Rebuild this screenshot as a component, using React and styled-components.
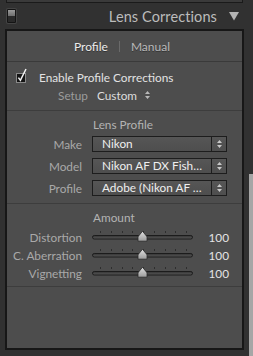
import React from 'react';
import styled, { createGlobalStyle } from 'styled-components';

const Global = createGlobalStyle`
  html, body { margin: 0; padding: 0; background: #313131; }
  body { font-family: Lato, "Open Sans", sans-serif; }
`;

const FS = '11.8px';

const Page = styled.div`
  width: 253px;
  height: 356px;
  display: flex;
  background: #313131;
  overflow: hidden;
`;

const Column = styled.div`
  width: 239px;
  margin-left: 5px;
  display: flex;
  flex-direction: column;
  padding-bottom: 6px;
`;

const Gutter = styled.div`
  flex: 1;
  display: flex;
  justify-content: flex-end;
  padding-top: 174px;
`;

const ScrollThumb = styled.div`
  width: 4px;
  height: 182px;
  background: #a6a6a6;
`;

const Stub = styled.div`
  height: 2px;
  margin: 0 1px;
  background: #3a3a3a;
  border: 1px solid #1a1a1a;
  border-top: none;
`;

const Header = styled.div`
  height: 26px;
  display: flex;
  align-items: center;
  padding: 0 5px 0 2px;
`;

const Toggle = styled.div`
  width: 7px;
  height: 12px;
  border: 1px solid #141414;
  border-radius: 1px;
  background: linear-gradient(#9a9a9a 0, #6e6e6e 50%, #2a2a2a 50%, #2a2a2a 100%);
  box-shadow: 0 0 0 1px #444;
`;

const HeaderTitle = styled.div`
  margin-left: auto;
  font-size: 14.5px;
  color: #bcbcbc;
  letter-spacing: 0.1px;
`;

const Panel = styled.div`
  flex: 1;
  display: flex;
  flex-direction: column;
  background: #4d4d4d;
  border: 2px solid #171717;
`;

const Tabs = styled.div`
  height: 30px;
  display: flex;
  align-items: center;
  justify-content: center;
  gap: 11px;
  padding-right: 5px;
  border-bottom: 1px solid #3a3a3a;
  font-size: 12px;
`;

const Tab = styled.span`
  color: ${p => (p.$active ? '#ececec' : '#b9b9b9')};
  text-shadow: 0 1px 0 rgba(0, 0, 0, 0.35);
`;

const TabSep = styled.span`
  width: 1px;
  height: 11px;
  background: #6a6a6a;
`;

const Section = styled.div`
  display: flex;
  flex-direction: column;
  padding: ${p => p.$pad};
  border-bottom: ${p => (p.$last ? 'none' : '1px solid #3d3d3d')};
  flex: ${p => (p.$last ? 1 : 'none')};
`;

const CheckRow = styled.label`
  height: 16px;
  display: flex;
  align-items: center;
  padding-left: 9px;
  gap: 9px;
  font-size: ${FS};
  color: #e2e2e2;
`;

const SetupRow = styled.div`
  height: 18px;
  margin-top: 1px;
  display: grid;
  grid-template-columns: 81px auto auto;
  column-gap: 9px;
  align-items: center;
  justify-content: start;
  font-size: ${FS};
`;

const Label = styled.span`
  text-align: right;
  color: ${p => p.$color || '#a9a9a9'};
  white-space: nowrap;
`;

const Value = styled.span`
  color: #dcdcdc;
  display: flex;
  align-items: center;
  gap: 8px;
`;

const SectionTitle = styled.div`
  height: 14px;
  line-height: 14px;
  padding-left: 86px;
  font-size: ${FS};
  color: #b3b3b3;
  margin-bottom: ${p => p.$mb};
`;

const Rows = styled.div`
  display: flex;
  flex-direction: column;
  gap: ${p => p.$gap};
`;

const FieldRow = styled.div`
  height: ${p => p.$h};
  display: grid;
  grid-template-columns: 75px ${p => p.$ctl} ${p => p.$val || '0px'};
  column-gap: 10px;
  align-items: center;
  font-size: ${FS};
`;

const Select = styled.div`
  height: 16px;
  box-sizing: border-box;
  display: flex;
  border: 1px solid #1d1d1d;
  background: linear-gradient(#565656, #4e4e4e);
`;

const SelectText = styled.span`
  flex: 1;
  padding-left: 9px;
  line-height: 14px;
  color: #efefef;
  white-space: nowrap;
  overflow: hidden;
`;

const SelectArrows = styled.span`
  width: 14px;
  border-left: 1px solid #1d1d1d;
  display: flex;
  align-items: center;
  justify-content: center;
`;

const SliderValue = styled.span`
  text-align: right;
  color: #e4e4e4;
`;

const UpDown = ({ color = '#c8c8c8' }) => (
  <svg width="5" height="8" viewBox="0 0 5 8">
    <path d="M2.5 0 L5 3 L0 3 Z M0 5 L5 5 L2.5 8 Z" fill={color} />
  </svg>
);

const CheckBox = () => (
  <svg width="14" height="16" viewBox="0 0 14 16" style={{ marginTop: '-4px' }}>
    <rect x="0.5" y="6.5" width="9" height="9" fill="#141414" stroke="#8a8a8a" />
    <path d="M2.4 10.6 L4.4 13.4 L10 2" fill="none" stroke="#f2f2f2" strokeWidth="1.5" />
  </svg>
);

const Slider = ({ pos = 0.5 }) => {
  const w = 101;
  const cx = 0.5 + pos * (w - 1);
  const ticks = Array.from({ length: 9 }, (_, i) => 8 + i * 10.75);
  return (
    <svg width={w} height="18" viewBox={`0 0 ${w} 18`}>
      <defs>
        <linearGradient id="trk" x1="0" y1="0" x2="0" y2="1">
          <stop offset="0" stopColor="#333" />
          <stop offset="1" stopColor="#5a5a5a" />
        </linearGradient>
        <linearGradient id="thm" x1="0" y1="0" x2="0" y2="1">
          <stop offset="0" stopColor="#e0e0e0" />
          <stop offset="1" stopColor="#9a9a9a" />
        </linearGradient>
      </defs>
      {ticks.map((t, i) => (
        <rect key={i} x={Math.round(t)} y="3" width="1" height="2" fill="#2e2e2e" />
      ))}
      <rect x="0.5" y="7.5" width={w - 1} height="3.5" rx="1.75" fill="url(#trk)" stroke="#1c1c1c" />
      <path
        d={`M${cx - 4.5} 13.2 L${cx - 4.5} 9.5 Q${cx - 4.5} 8.5 ${cx - 3.5} 7.5 L${cx} 3.2 L${cx + 3.5} 7.5 Q${cx + 4.5} 8.5 ${cx + 4.5} 9.5 L${cx + 4.5} 13.2 Z`}
        fill="url(#thm)"
        stroke="#2a2a2a"
        strokeWidth="0.8"
      />
    </svg>
  );
};

const DownTriangle = () => (
  <svg width="10" height="9" viewBox="0 0 10 9" style={{ marginLeft: '12px', marginTop: '1px' }}>
    <path d="M0 0 L10 0 L5 8.5 Z" fill="#b4b4b4" />
  </svg>
);

const selects = [
  { label: 'Make', value: 'Nikon' },
  { label: 'Model', value: 'Nikon AF DX Fish…' },
  { label: 'Profile', value: 'Adobe (Nikon AF …' },
];

const sliders = [
  { label: 'Distortion', value: 100 },
  { label: 'C. Aberration', value: 100 },
  { label: 'Vignetting', value: 100 },
];

export default function App() {
  return (
    <>
      <Global />
      <Page>
        <Column>
          <Stub />
          <Header>
            <Toggle />
            <HeaderTitle>Lens Corrections</HeaderTitle>
            <DownTriangle />
          </Header>
          <Panel>
            <Tabs>
              <Tab $active>Profile</Tab>
              <TabSep />
              <Tab>Manual</Tab>
            </Tabs>
            <Section $pad="7px 0 6px">
              <CheckRow>
                <CheckBox />
                Enable Profile Corrections
              </CheckRow>
              <SetupRow>
                <Label $color="#9c9c9c">Setup</Label>
                <Value>
                  Custom <UpDown color="#b8b8b8" />
                </Value>
              </SetupRow>
            </Section>
            <Section $pad="7px 0 7px">
              <SectionTitle $mb="4px">Lens Profile</SectionTitle>
              <Rows $gap="6px">
                {selects.map(s => (
                  <FieldRow key={s.label} $h="16px" $ctl="135px">
                    <Label>{s.label}</Label>
                    <Select>
                      <SelectText>{s.value}</SelectText>
                      <SelectArrows>
                        <UpDown />
                      </SelectArrows>
                    </Select>
                  </FieldRow>
                ))}
              </Rows>
            </Section>
            <Section $pad="7px 0 4px">
              <SectionTitle $mb="3px">Amount</SectionTitle>
              <Rows $gap="0px">
                {sliders.map(s => (
                  <FieldRow key={s.label} $h="18px" $ctl="101px" $val="26px">
                    <Label>{s.label}</Label>
                    <Slider pos={0.5} />
                    <SliderValue>{s.value}</SliderValue>
                  </FieldRow>
                ))}
              </Rows>
            </Section>
            <Section $last />
          </Panel>
        </Column>
        <Gutter>
          <ScrollThumb />
        </Gutter>
      </Page>
    </>
  );
}
